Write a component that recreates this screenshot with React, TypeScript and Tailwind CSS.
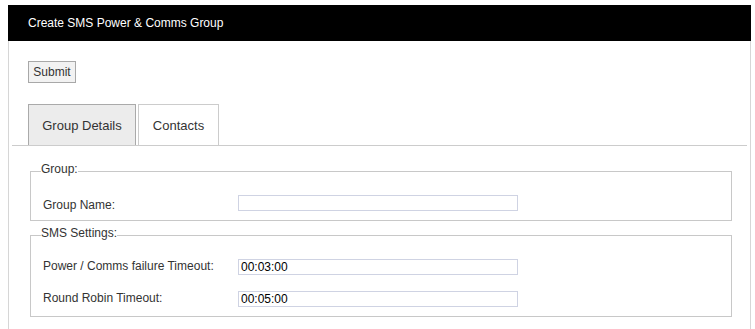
import React from "react";

const FONT = { fontFamily: '"Liberation Sans", Arial, sans-serif' };

function Row({
  label,
  value,
  labelClass,
}: {
  label: string;
  value: string;
  labelClass: string;
}) {
  return (
    <div className="flex h-[16px] items-start">
      <div className={`w-[197px] pl-[2px] text-[12px] text-[#333] ${labelClass}`}>{label}</div>
      <input
        readOnly
        value={value}
        className="h-[16px] w-[280px] border border-[#cfd3e3] bg-white px-[2px] text-[12px] leading-[14px] text-black outline-none"
      />
    </div>
  );
}

function Group({
  legend,
  className,
  children,
}: {
  legend: string;
  className?: string;
  children: React.ReactNode;
}) {
  return (
    <fieldset
      className={`ml-[18px] mr-[15px] border border-[#c8c8c8] px-[10px] pb-[9px] pt-[15px] ${className ?? ""}`}
    >
      <legend className="pb-[4px] text-[12px] leading-[14px] text-[#333]">{legend}</legend>
      {children}
    </fieldset>
  );
}

export default function App() {
  return (
    <div className="min-h-[329px] bg-white pl-[8px] pt-[5px]" style={FONT}>
      <div className="w-[743px]">
        <div className="flex h-[36px] items-center bg-black pl-[20px] text-[12px] text-white">
          Create SMS Power &amp; Comms Group
        </div>

        <div className="min-h-[288px] border-x border-[#d6d6d6] px-[3px]">
          <div className="flex pl-[16px] pt-[20px]">
            <button
              type="button"
              className="h-[22px] w-[48px] border border-[#a8a8a8] bg-[#f2f2f2] text-[12px] leading-[20px] text-[#333]"
            >
              Submit
            </button>
          </div>

          <div className="mt-[21px] flex gap-[2px] border-b border-[#cccccc] pl-[16px]">
            <div className="h-[41px] w-[108px] border-x border-t border-[#aaaaaa] bg-[#ececec] pt-[13px] text-center text-[13px] leading-[15px] text-[#333]">
              Group Details
            </div>
            <div className="h-[41px] w-[81px] border-x border-t border-[#cccccc] bg-white pt-[13px] text-center text-[13px] leading-[15px] text-[#333]">
              Contacts
            </div>
          </div>

          <Group legend="Group:" className="mt-[16px]">
            <Row label="Group Name:" value="" labelClass="pt-[4px] leading-[12px]" />
          </Group>

          <Group legend="SMS Settings:" className="mt-[5px]">
            <div className="flex flex-col gap-[16px]">
              <Row
                label="Power / Comms failure Timeout:"
                value="00:03:00"
                labelClass="leading-[14px]"
              />
              <Row label="Round Robin Timeout:" value="00:05:00" labelClass="leading-[14px]" />
            </div>
          </Group>
        </div>
      </div>
    </div>
  );
}
